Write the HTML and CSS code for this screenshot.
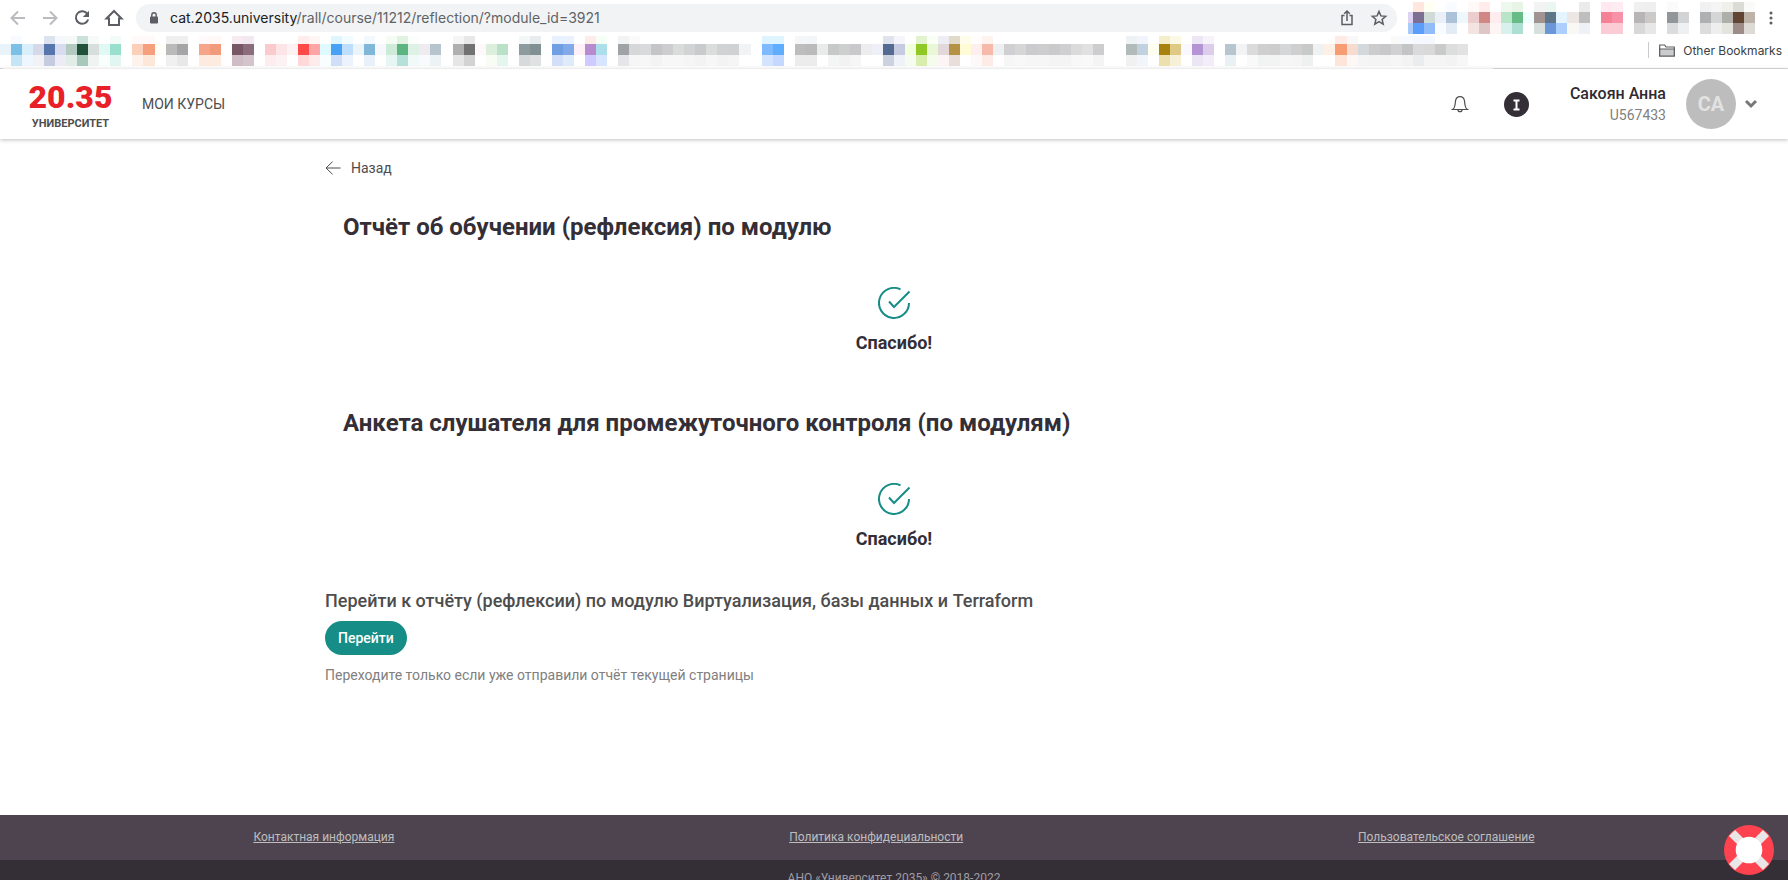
FILE: index.html
```html
<!DOCTYPE html>
<html lang="ru">
<head>
<meta charset="utf-8">
<title>Университет 20.35</title>
<link rel="stylesheet" href="styles.css">
</head>
<body>
<div class="toolbar">
  <button class="tool" aria-label="Back"><svg class="tool-icon dim" viewBox="0 0 20 20"><path d="M17 10H4M10 3.500L3.500 10l6.500 6.500"/></svg></button>
  <button class="tool" aria-label="Forward"><svg class="tool-icon dim" viewBox="0 0 20 20"><path d="M3 10h13M10 3.500L16.500 10 10 16.500"/></svg></button>
  <button class="tool" aria-label="Reload"><svg class="tool-icon" viewBox="0 0 20 20"><path d="M15.500 6A6.300 6.300 0 1 0 16.200 11.500"/><path class="solid" d="M17 2.800v6.200h-6.200z"/></svg></button>
  <button class="tool" aria-label="Home"><svg class="tool-icon" viewBox="0 0 20 20"><path d="M2.500 10.500L10 3l7.500 7.500h-2.500V17H5v-6.500z"/></svg></button>
  <div class="omnibox">
    <svg class="lock" viewBox="0 0 10 12"><rect x="1" y="4.500" width="8" height="7" rx="1"/><path d="M2.800 5V3a2.200 2.200 0 0 1 4.400 0v2"/></svg>
    <div class="url"><span class="host">cat.2035.university</span>/rall/course/11212/reflection/?module_id=3921</div>
    <button class="tool end" aria-label="Share"><svg class="tool-icon thin" viewBox="0 0 20 20"><path d="M7.500 7.500h-2.500v9h10v-9h-2.500M10 13V3M7.200 5.700L10 3l2.800 2.700"/></svg></button>
    <button class="tool end" aria-label="Bookmark"><svg class="tool-icon thin" viewBox="0 0 20 20"><path d="M10 3.500l1.900 4.400 4.800.4-3.600 3.200 1.100 4.700L10 13.700l-4.200 2.500 1.100-4.700-3.600-3.200 4.800-.4z"/></svg></button>
  </div>
  <svg class="extensions" id="extensions" viewBox="0 0 32 32" preserveAspectRatio="none"></svg>
  <button class="menu" aria-label="Menu"><svg class="dots" viewBox="0 0 4 14"><circle cx="2" cy="2" r="1.500"/><circle cx="2" cy="7" r="1.500"/><circle cx="2" cy="12" r="1.500"/></svg></button>
</div>
<div class="bookmarks">
  <svg class="tiles" id="tiles" viewBox="0 0 162 34" preserveAspectRatio="none"></svg>
  <button class="other"><svg class="folder" viewBox="0 0 16 13"><path d="M.7 12V1h5l1.300 2h8.300v9z" fill="#fff"/><path d="M.7 12V5h14.600v7z" fill="#ccc"/></svg>Other Bookmarks</button>
</div>

<header class="header">
  <a class="logo" href="#"><span class="logo-num">20.35</span><span class="logo-name">УНИВЕРСИТЕТ</span></a>
  <nav class="nav"><a href="#">МОИ КУРСЫ</a></nav>
  <button class="bell" aria-label="Уведомления"><svg viewBox="0 0 18 18"><path d="M1.500 14.500h15c-1.800-1-2.200-2.500-2.500-4.500l-.5-4c-.4-2.800-2.200-4.300-4.500-4.300S4.900 3.200 4.500 6L4 10c-.3 2-.7 3.500-2.500 4.500zM7 14.700a2 2 0 0 0 4 0"/></svg></button>
  <button class="badge" aria-label="I"><svg viewBox="0 0 25 25"><circle cx="12.500" cy="12.500" r="12.500" fill="#342e36"/><path d="M9.500 8.500h6M12.500 8.500v9M9.500 17.500h6" stroke="#fff" stroke-width="2"/></svg></button>
  <div class="user"><div class="user-name">Сакоян Анна</div><div class="user-id">U567433</div></div>
  <div class="avatar">СА</div>
  <button class="chevron" aria-label="Меню профиля"><svg viewBox="0 0 14 10"><path d="M2 2l5 5 5-5"/></svg></button>
</header>

<main class="main">
  <a class="back" href="#"><svg viewBox="0 0 16 14"><path d="M15.500 7H1M7.500.7L1 7l6.500 6.300"/></svg>Назад</a>
  <section class="report">
    <h2 class="report-title">Отчёт об обучении (рефлексия) по модулю</h2>
    <svg class="check" viewBox="0 0 32 32"><path d="M31 16a15 15 0 1 1-8.500-13.600M11 14.500l5 5.500L31.500 4.500"/></svg>
    <p class="thanks">Спасибо!</p>
  </section>
  <section class="report">
    <h2 class="report-title">Анкета слушателя для промежуточного контроля (по модулям)</h2>
    <svg class="check" viewBox="0 0 32 32"><path d="M31 16a15 15 0 1 1-8.500-13.600M11 14.500l5 5.500L31.500 4.500"/></svg>
    <p class="thanks">Спасибо!</p>
  </section>
  <section class="next">
    <h3 class="next-title">Перейти к отчёту (рефлексии) по модулю Виртуализация, базы данных и Terraform</h3>
    <button class="go">Перейти</button>
    <p class="hint">Переходите только если уже отправили отчёт текущей страницы</p>
  </section>
</main>

<footer class="footer">
  <div class="links"><a href="#">Контактная информация</a><a href="#">Политика конфидециальности</a><a href="#">Пользовательское соглашение</a></div>
  <div class="copyright">АНО «Университет 2035» © 2018-2022</div>
</footer>
<button class="help" aria-label="Помощь"><svg viewBox="0 0 50 50"><circle cx="25" cy="25" r="25" fill="#ff424f"/><path d="M8 8l34 34M42 8L8 42" stroke="#e9e6e7" stroke-width="8.500"/><circle cx="25" cy="25" r="13.300" fill="#fff"/></svg></button>
<script src="tiles.js"></script>
</body>
</html>
```
FILE: styles.css
```css
* { box-sizing: border-box; }
body {
  margin: 0;
  height: 100vh;
  overflow: hidden;
  background: #fff;
  color: #4d4d4d;
  font-family: Roboto, "Noto Sans", sans-serif;
}
button { border: 0; padding: 0; background: none; font: inherit; color: inherit; }
a { color: inherit; text-decoration: none; }
h2, h3, p { margin: 0; }
svg { display: block; }

.toolbar { display: flex; align-items: center; height: 36px; padding-right: 15px; }
.tool { flex: none; width: 32px; display: flex; justify-content: center; }
.toolbar > .tool:first-child { margin-left: 2px; }
.tool-icon { width: 20px; height: 20px; fill: none; stroke: #5b5e63; stroke-width: 2; }
.tool-icon .solid { fill: #5b5e63; stroke: none; }
.tool-icon.dim { stroke: #b9bbbe; }
.tool-icon.thin { stroke-width: 1.5; }
.omnibox {
  flex: 1;
  display: flex;
  align-items: center;
  height: 28px;
  margin-left: 6px;
  padding: 0 2px 0 13px;
  border-radius: 14px;
  background: #f1f3f4;
}
.lock { width: 10px; height: 12px; margin-right: 11px; fill: #5b5e63; stroke: none; }
.lock path { fill: none; stroke: #5b5e63; stroke-width: 1.4; }
.url { flex: 1; font-family: Inter, Roboto, sans-serif; font-size: 14px; line-height: 20px; color: #5f6368; }
.host { color: #202124; }
.extensions { width: 20%; max-width: 353px; height: 32px; margin-left: 5px; }
.menu { width: 4px; margin-left: 14px; }
.dots { width: 4px; height: 14px; fill: #5b5e63; }

.bookmarks {
  display: grid;
  height: 33px;
  border-bottom: 1px solid #dadbdd;
}
.tiles { grid-area: 1 / 1; width: 100%; height: 34px; }
.other {
  grid-area: 1 / 1;
  justify-self: end;
  display: flex;
  align-items: center;
  gap: 8px;
  height: 16px;
  margin: 6px 6px 0 0;
  padding-left: 10px;
  border-left: 1px solid #c9cbce;
  font-family: Inter, Roboto, sans-serif;
  font-size: 12px;
  color: #3c4043;
}
.folder { width: 16px; height: 13px; stroke: #5b5e63; stroke-width: 1.2; }

.header {
  position: relative;
  display: flex;
  align-items: center;
  height: 70px;
  padding: 0 30px 0 31px;
  box-shadow: 0 1px 4px rgba(0, 0, 0, .25);
}
.logo { display: flex; flex-direction: column; align-items: center; width: 79px; }
.logo-num { font-size: 32px; line-height: 40px; font-weight: 900; color: #e82129; }
.logo-name { font-size: 11px; line-height: 14px; font-weight: 700; }
.nav { flex: 1; margin-left: 32px; font-size: 14px; }
.bell svg { width: 18px; height: 18px; fill: none; stroke: #4d4d4d; stroke-width: 1.2; }
.badge { margin: 0 41px 0 35px; }
.badge svg { width: 25px; height: 25px; }
.user { text-align: right; }
.user-name { font-size: 16px; line-height: 22px; font-weight: 500; color: #2f2b31; }
.user-id { font-size: 14px; line-height: 20px; color: #808080; }
.avatar {
  width: 50px;
  height: 50px;
  margin: 0 8px 0 20px;
  border-radius: 50%;
  background: #bdbdbd;
  color: #e2e2e2;
  font-size: 20px;
  line-height: 50px;
  font-weight: 700;
  text-align: center;
}
.chevron svg { width: 14px; height: 10px; fill: none; stroke: #777; stroke-width: 3; }

.main { max-width: 1138px; margin: 0 auto; padding: 17px 0 130px; }
.back { display: inline-flex; align-items: center; gap: 10px; font-size: 14px; line-height: 24px; }
.back svg { width: 16px; height: 14px; fill: none; stroke: #4d4d4d; }
.report { padding-top: 31px; padding-bottom: 21px; }
.report-title { padding-left: 18px; font-size: 24px; line-height: 32px; font-weight: 700; color: #342e36; }
.check { width: 32px; height: 32px; margin: 44px auto 12px; fill: none; stroke: #168d86; stroke-width: 2; }
.thanks { font-size: 18px; line-height: 24px; font-weight: 700; text-align: center; color: #342e36; }
.next { padding-top: 17px; }
.next-title { font-size: 18px; line-height: 24px; font-weight: 500; }
.go {
  margin: 8px 0 10px;
  padding: 0 13px;
  border-radius: 17px;
  background: #168d86;
  color: #fff;
  font-size: 14px;
  line-height: 34px;
  font-weight: 500;
}
.hint { font-size: 14px; line-height: 20px; color: #808080; }

.footer { font-size: 12px; color: #bdbdbd; }
.links {
  display: flex;
  justify-content: space-around;
  padding: 0 56px;
  background: #4d4450;
  line-height: 45px;
}
.links a { text-decoration: underline; }
.copyright { padding: 10px 0; background: #342e36; line-height: 16px; text-align: center; color: #a09ca2; }
.help { position: fixed; right: 14px; bottom: 5px; }
.help svg { width: 50px; height: 50px; }
```
FILE: tiles.js
```js
const NS = "http://www.w3.org/2000/svg";

/* Each entry: column, then the colours of the top, middle and bottom rows ("-" leaves a row blank). */
const bookmarks = `0 - e8f4fa -|1 f7fbff 7cc0e7 c5e5f6|2 - d9effb eef6ff|3 - d5d9e9 f2f2f6|4 dde3ee 5676ad c5cce0|5 f6f7fd d7dcf0 ecebf6|6 f5faf8 b3cac0 e3ede8|7 cbe2da 215239 a9c8bc|8 f8faf9 d6dfdc eff4f2|9 - e0f9f4 f8fffd|10 f1fcf9 99dfce e1f6f1|12 fff9f9 fccfb9 fef3ec|13 fffaf9 f59f7c fde7d8|14 - fffdf8 -|15 efefef bababa f0f0f0|16 efefef a5a5a7 e8e8e8|18 fffafa f7a58a fdebdf|19 fff8f7 f29b7c fdebdf|21 f7eaf1 775764 cfbcc5|22 f3e8ee 8a6c7b d4c5cc|24 - fbcacc fdedee|25 - fce5e6 fdf2f3|26 - fef1f1 -|27 ffecec ff4848 ffd9d9|28 fff5f5 ffa5a5 feecec|29 - dffaff f8fdff|30 e0f6ff 48a1f4 cfdff8|31 f2fbff bddefc ecf3fd|32 - ebf4f9 -|33 f1f9ff 80b7d8 e8f0f9|34 - f6f8fc -|35 f6fcf4 cdebd8 e8f6f3|36 e0f3e0 5cb580 b5e1da|37 fbfefb ddf1e4 f2faf9|38 - efebf1 f9fafb|39 - b6c4cd edf2f5|41 f4f6f5 afafaf e6e6e6|42 e8e8e8 727272 d3d3d3|43 - fef8fb -|44 - dbefdc f9fbf5|45 - b9e1c7 e5f5ef|47 f3f7f7 8d9b9f d6dadc|48 e8ecee 809093 dfe2e3|50 e8f1ff 709ee3 d3dff8|51 eaf2ff 83aae8 dfeafb|52 - feeff8 -|53 fdece8 b88bcf cfcaff|54 f5fff6 addfeb d7e5ff|56 f2f4f4 9fa3a6 e6e6e8|57 fafafa d6d7d9 f6f6f6|58 - d8dadc f7f7f7|59 - c5c5c8 f3f3f3|60 - cdcdcf f7f7f7|61 - dadcdb f7f7f7|62 - d2d3d4 f5f5f5|63 - c8cacb f3f3f3|64 - dbdddc f7f7f7|65 - d1d2d4 f3f3f3|66 - d0d1d3 f5f5f5|67 - f2f3f5 -|69 def4fe 7dbaff d4e4ff|70 def4fe 5fadff c5d8ff|72 f5f6f8 bdbdbd ececec|73 f2f6f6 bababa ececec|74 - e9ebea -|75 - c7c9c8 f3f6f5|76 - cccfce f2f2f2|77 - c9c9cb f6f6f6|78 - ededef -|79 - eff0f7 -|80 dfe4ec 546a93 cdd2df|81 f5f6fb c7cbe1 f0f2f9|82 - f0ffdc f7fcf0|83 e3f3d0 90c825 d8edae|84 fafff5 e8f8d6 f5fcee|85 eeedf3 e2d8da fdf5f5|86 e2dac8 b59243 eadedb|87 fefdec fffbd6 -|88 fffdfd feeeee fdf9f9|89 fff3f0 f7b9a9 feebe7|90 - eeeff1 -|91 - d0d0d2 f6f6f6|92 - d6d6d6 f8f8f8|93 - cbcbcd f6f6f6|94 - cdcdcf f6f6f6|95 - cacaca f4f4f4|96 - cfcfd1 f4f4f4|97 - dbdbdb f8f8f8|98 - e1e1e1 f9f9f9|99 - cdcdcf f4f4f4|102 eff2f4 b2bbb9 f1f1f1|103 f1f4fa c1d1e0 f2f6fb|104 - fffff0 -|105 f5eecb a7820f ece0ae|106 fbf8e5 dfca85 f7f0d8|107 - f9f7ff -|108 ede6f5 b594d5 ece6f4|109 f7f3fb dccdec f2edf9|111 - b7c5ce eaf1f5|112 - f2f3f5 -|113 - dbdbdb f9f9f9|114 - cfcfd1 f2f4f4|115 - cccdcc f2f4f4|116 - d5d6d8 f6f6f6|117 - cfcfcf f5f5f5|118 - c8cac9 eff1f1|119 - f0f1f3 -|120 - fff0e5 -|121 ffeae6 f79d74 fde6d9|122 f8f8f8 f5dbd0 fdf8f5|123 - d2d8dc f5f5f5|124 - cccccc f4f4f4|125 - c8c8ca f4f4f4|126 fafafa d1d1d3 f6f6f6|127 f7faff c4c4c6 f3f3f3|128 f5f8ff dadadb ebecee|129 f5f8ff d9d9d9 f5f5f5|130 - cacacd f5f5f5|131 - dcdedd f3f3f3|132 - e2e2e2 f7f7f7`;

const extensions = `0.5 - ded3f2 a9cbfa|1 ffe6df 7c6f92 5b9df8|2 fffff3 d0dad6 90bcfa|3 - eaeff8 f8fbff|4 f8fbff abc2d8 e3ebf4|5 - edf7fc -|6 fff9f8 eccdcd f3e3e1|7 ffeceb d18784 dec6c6|8 - feecee fff4f4|9 eef8ee b8e5c8 d9f1ec|10 e7f4e6 67bb86 addfd3|11 - effffd -|12 f3f3f3 a09392 d7e0dc|13 ecf6f1 5f7689 6a97d8|14 - e5f5ff adcffd|15 - ece7e4 faf8f5|16 ebecea bebebe eef2f7|18 ffe8f0 f58197 fbcbd6|19 ffecf2 f991a6 fbcbd6|21 f0f0f0 b7b5b6 d8d8d8|22 efefef cbcac9 e7e7e7|24 fafafa 919699 dbdcde|25 - d2d3d5 eff0f2|27 f1f1f1 afb0b2 dcdcdc|28 f5f5f5 d4d5d7 eeeeee|29 eff0ec aeafa9 e4e4df|30 dcdcd6 614431 9d8c88|31 fafaf8 bdb3a9 dedad5`;

function rect(svg, x, y, width, height, fill) {
  const r = document.createElementNS(NS, "rect");
  Object.entries({ x, y, width, height, fill }).forEach(([k, v]) => r.setAttribute(k, v));
  svg.append(r);
}

function draw(id, data, rows) {
  const svg = document.getElementById(id);
  svg.setAttribute("shape-rendering", "crispEdges");
  data.split("|").forEach((entry) => {
    const [col, ...colours] = entry.split(" ");
    colours.forEach((c, i) => {
      if (c !== "-") rect(svg, col, rows[i], 1, rows[i + 1] - rows[i], "#" + c);
    });
  });
}

rect(document.getElementById("tiles"), 0.3, 30, 135, 4, "#fdfdfd");
draw("tiles", bookmarks, [0, 8, 19, 30]);
draw("extensions", extensions, [0, 10, 21, 32]);
```
